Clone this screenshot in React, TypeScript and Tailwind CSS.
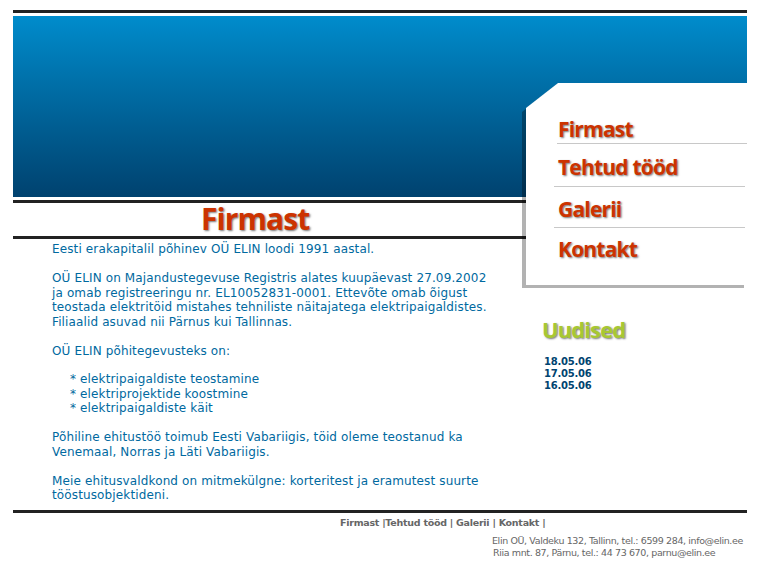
const menu = [
  { label: "Firmast", row: "h-[60px] pl-[32px] pt-[32px]", line: "ml-[31px] w-[190px]" },
  { label: "Tehtud tööd", row: "h-[42px] pl-[32px] pt-[9px]", line: "ml-[28px] w-[191px]" },
  { label: "Galerii", row: "h-[40px] pl-[32px] pt-[8px]", line: "ml-[28px] w-[191px]" },
  { label: "Kontakt", row: "h-[40px] pl-[32px] pt-[7px]", line: "" },
];

const headingFont = "font-['Open_Sans',sans-serif] font-bold";

const Rule = () => <div className="h-[3px] bg-[#222222]" />;

const SideMenu = () => (
  <div className="absolute left-[522px] top-[83px] h-[205px] w-[225px]">
    <div className="absolute inset-y-0 left-0 w-[222px] bg-black/30 [clip-path:polygon(36px_0,100%_0,100%_100%,0_100%,0_29px)]" />
    <div className="absolute left-[4px] top-0 h-[202px] w-[221px] bg-white [clip-path:polygon(32px_0,100%_0,100%_100%,0_100%,0_25px)]">
      {menu.map((m) => (
        <div key={m.label}>
          <div className={`${m.row} ${headingFont} text-[21px] leading-[28px] tracking-[-0.8px] text-[#cc3300] [text-shadow:1px_1px_2px_#777777] whitespace-nowrap`}>
            {m.label}
          </div>
          {m.line && <div className={`${m.line} h-px bg-[#c8c8c8]`} />}
        </div>
      ))}
    </div>
  </div>
);

export default function App() {
  return (
    <div className="relative h-[579px] w-[764px] overflow-hidden bg-white pt-[10px] font-['DejaVu_Sans',sans-serif]">
      <div className="ml-[13px] w-[734px]">
        <Rule />
        <div className="mt-[3px] h-[181px] bg-gradient-to-b from-[#008ccc] to-[#00426f]" />
        <div className="mt-[3px]">
          <Rule />
        </div>
        <h1 className={`h-[33px] pl-[188px] ${headingFont} text-[30px] leading-[32px] tracking-[-0.9px] text-[#cc3300] [text-shadow:1px_1px_2px_#777777]`}>
          Firmast
        </h1>
        <Rule />

        <div className="flex h-[271px]">
          <div className="w-[500px] pl-[39px] pt-[3px] text-[12px] leading-[14.5px] tracking-[0.13px] text-[#0069a0] whitespace-nowrap">
            <p className="mb-[14.5px]">Eesti erakapitalil põhinev OÜ ELIN loodi 1991 aastal.</p>
            <p className="mb-[14.5px]">
              OÜ ELIN on Majandustegevuse Registris alates kuupäevast 27.09.2002
              <br />
              ja omab registreeringu nr. EL10052831-0001. Ettevõte omab õigust
              <br />
              teostada elektritöid mistahes tehniliste näitajatega elektripaigaldistes.
              <br />
              Filiaalid asuvad nii Pärnus kui Tallinnas.
            </p>
            <p className="mb-[14px]">OÜ ELIN põhitegevusteks on:</p>
            <ul className="mb-[14.5px] pl-[18px]">
              <li>* elektripaigaldiste teostamine</li>
              <li>* elektriprojektide koostmine</li>
              <li>* elektripaigaldiste käit</li>
            </ul>
            <p className="mb-[14.5px]">
              Põhiline ehitustöö toimub Eesti Vabariigis, töid oleme teostanud ka
              <br />
              Venemaal, Norras ja Läti Vabariigis.
            </p>
            <p>
              Meie ehitusvaldkond on mitmekülgne: korteritest ja eramutest suurte
              <br />
              tööstusobjektideni.
            </p>
          </div>
          <div className="flex-1 pl-[29px] pt-[75px]">
            <h2 className={`${headingFont} text-[22px] leading-[30px] tracking-[-0.9px] text-[#a8c832] [text-shadow:1px_1px_2px_#777777]`}>
              Uudised
            </h2>
            <div className="mt-[12px] pl-[2px] text-[10px] font-bold leading-[12px] tracking-[-0.25px] text-[#004470]">
              <div>18.05.06</div>
              <div>17.05.06</div>
              <div>16.05.06</div>
            </div>
          </div>
        </div>

        <Rule />
        <div className="pl-[327px] pt-[4px] text-[9.5px] font-bold leading-[12px] tracking-[-0.26px] text-[#666666] whitespace-pre">
          Firmast |Tehtud tööd | Galerii | Kontakt |
        </div>
        <div className="pl-[479px] pt-[6px] text-[9.5px] leading-[12px] tracking-[-0.38px] text-[#666666] whitespace-nowrap">
          <div>Elin OÜ, Valdeku 132, Tallinn, tel.: 6599 284, info@elin.ee</div>
          <div className="pl-px">Riia mnt. 87, Pärnu, tel.: 44 73 670, parnu@elin.ee</div>
        </div>
      </div>
      <SideMenu />
    </div>
  );
}
